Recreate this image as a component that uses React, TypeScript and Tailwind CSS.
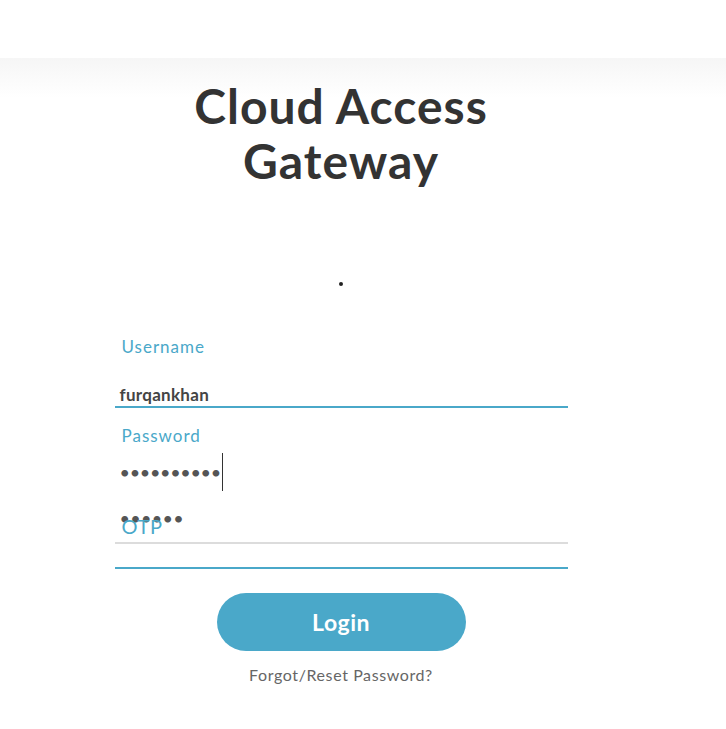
export default function App() {
  return (
    <div className="min-h-[729px] w-[726px] bg-white font-['Lato',sans-serif]">
      {/* top bar */}
      <div className="h-[58px] bg-white" />
      <div className="-mb-[40px] h-[40px] bg-gradient-to-b from-[#f6f6f6] to-white" />

      <main className="flex w-[682px] flex-col items-center">
        <h1 className="mt-[20px] text-center text-[48px] font-bold leading-[55px] tracking-[1px] text-[#333]">
          Cloud Access
          <br />
          Gateway
        </h1>

        <span className="mt-[94px] block h-[4px] w-[4px] rounded-full bg-[#222]" />

        <form className="mt-[51px] flex w-[453px] flex-col">
          <label className="h-[20px] pl-[7px] text-[17px] leading-[20px] tracking-[1px] text-[#4aa8c9]">Username</label>
          <div className="mt-[27px] h-[22px] pl-[5px] text-[17px] font-bold leading-[22px] tracking-[0.3px] text-[#444]">
            furqankhan
          </div>
          <div className="h-[2px] bg-[#4aa8c9]" />

          <label className="mt-[18px] h-[20px] pl-[7px] text-[17px] leading-[20px] tracking-[1px] text-[#4aa8c9]">Password</label>
          <div className="mt-[7px] flex h-[38px] items-center pl-[5px]">
            <span className="text-[18px] leading-none tracking-[-0.3px] text-[#555]">••••••••••</span>
            <span className="ml-[1px] h-[38px] w-px bg-[#333]" />
          </div>

          <div className="relative h-[51px]">
            <span className="absolute left-[5px] top-[18px] text-[18px] leading-none tracking-[0.3px] text-[#555]">
              ••••••
            </span>
            <span className="absolute left-[7px] top-[25px] text-[20px] leading-none tracking-[0.6px] text-[#4aa8c9]">OTP</span>
          </div>
          <div className="h-[2px] bg-[#dcdcdc]" />
          <div className="mt-[23px] h-[2px] bg-[#4aa8c9]" />

          <button
            type="button"
            className="mx-auto mt-[24px] h-[58px] w-[249px] rounded-full bg-[#4aa8c9] text-[23px] font-bold tracking-[0.5px] text-white"
          >
            Login
          </button>
          <a href="#" className="mt-[12px] text-center text-[16px] tracking-[0.6px] text-[#666]">
            Forgot/Reset Password?
          </a>
        </form>
      </main>
    </div>
  );
}
